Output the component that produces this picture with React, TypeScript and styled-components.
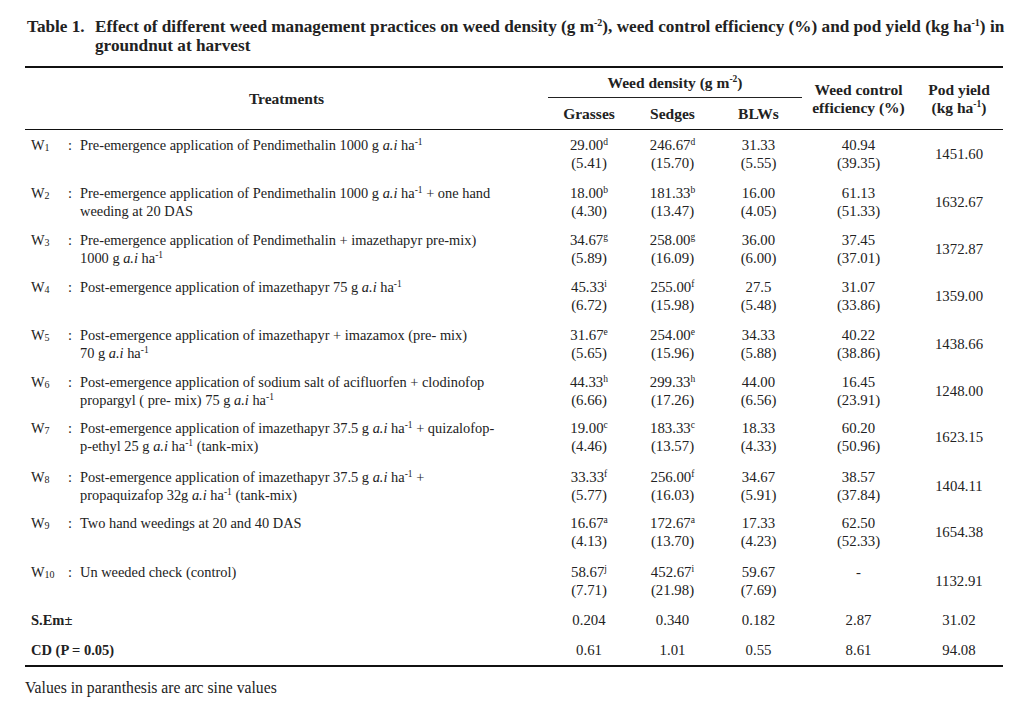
import React from 'react';
import styled, { createGlobalStyle } from 'styled-components';

const Global = createGlobalStyle`
  html, body { margin: 0; padding: 0; background: #fff; }
  body {
    font-family: "Liberation Serif", "Times New Roman", serif;
    color: #222;
  }
  sup { line-height: 0; }
`;

const COLS = '523px 82px 85px 87px 113px 88px';

const Page = styled.div`
  width: 1024px;
  height: 709px;
  box-sizing: border-box;
  padding: 17px 0 0 25px;
  overflow: hidden;
`;

const Title = styled.div`
  display: flex;
  font-weight: bold;
  font-size: 17.2px;
  line-height: 19px;
  white-space: nowrap;
  sup { font-size: 10px; vertical-align: 6px; }
`;

const TitleLabel = styled.div`
  width: 68px;
  padding-left: 2px;
  flex: none;
`;

const TitleText = styled.div``;

const Rule = styled.div<{ $w: number; $mt?: number }>`
  width: 978px;
  height: ${(p) => p.$w}px;
  background: #111;
  margin-top: ${(p) => p.$mt ?? 0}px;
`;

const Table = styled.div`
  width: 978px;
`;

const Header = styled.div`
  display: grid;
  grid-template-columns: ${COLS};
  grid-template-rows: 30px 31px;
  font-weight: bold;
  font-size: 15.5px;
  line-height: 18px;
  sup { font-size: 9.5px; vertical-align: 6px; }
`;

const HeadCell = styled.div<{ $col: string; $row: string; $line?: boolean }>`
  grid-column: ${(p) => p.$col};
  grid-row: ${(p) => p.$row};
  display: flex;
  align-items: center;
  justify-content: center;
  text-align: center;
  white-space: nowrap;
  ${(p) => (p.$line ? 'border-bottom: 1.5px solid #222;' : '')}
`;

const Row = styled.div<{ $h: number }>`
  display: grid;
  grid-template-columns: ${COLS};
  height: ${(p) => p.$h}px;
  align-items: start;
  padding-top: 6px;
  box-sizing: border-box;
  font-size: 14.4px;
  line-height: 18px;
`;

const Treat = styled.div`
  display: flex;
  padding-left: 6px;
  white-space: nowrap;
`;

const Code = styled.div`
  width: 37px;
  flex: none;
  sub { font-size: 10px; vertical-align: -1px; line-height: 0; }
`;

const Colon = styled.div`
  width: 12px;
  flex: none;
`;

const Desc = styled.div`
  sup { font-size: 9.5px; vertical-align: 5px; }
`;

const Num = styled.div`
  text-align: center;
  white-space: nowrap;
  font-size: 14.8px;
  sup { font-size: 9.5px; vertical-align: 5px; }
`;

const Pod = styled.div`
  height: 36px;
  display: flex;
  align-items: center;
  justify-content: center;
  font-size: 14.8px;
`;

const StatRow = styled.div`
  display: grid;
  grid-template-columns: ${COLS};
  height: 30px;
  align-items: center;
  line-height: 18px;
`;

const StatLabel = styled.div`
  padding-left: 6px;
  font-weight: bold;
  font-size: 14.5px;
`;

const Foot = styled.div`
  margin-top: 12px;
  font-size: 15.7px;
  line-height: 18px;
`;

const AI = () => (
  <>
    <i>a.i</i> ha<sup>-1</sup>
  </>
);

type R = {
  n: string;
  h: number;
  d: React.ReactNode;
  g: [string, string, string];
  s: [string, string, string];
  b: [string, string];
  w: [string, string];
  p: string;
};

const rows: R[] = [
  { n: '1', h: 48, d: <>Pre-emergence application of Pendimethalin 1000 g <AI /></>, g: ['29.00', 'd', '(5.41)'], s: ['246.67', 'd', '(15.70)'], b: ['31.33', '(5.55)'], w: ['40.94', '(39.35)'], p: '1451.60' },
  { n: '2', h: 47, d: <>Pre-emergence application of Pendimethalin 1000 g <AI /> + one hand<br />weeding at 20 DAS</>, g: ['18.00', 'b', '(4.30)'], s: ['181.33', 'b', '(13.47)'], b: ['16.00', '(4.05)'], w: ['61.13', '(51.33)'], p: '1632.67' },
  { n: '3', h: 47, d: <>Pre-emergence application of Pendimethalin + imazethapyr pre-mix)<br />1000 g <AI /></>, g: ['34.67', 'g', '(5.89)'], s: ['258.00', 'g', '(16.09)'], b: ['36.00', '(6.00)'], w: ['37.45', '(37.01)'], p: '1372.87' },
  { n: '4', h: 48, d: <>Post-emergence application of imazethapyr 75 g <AI /></>, g: ['45.33', 'i', '(6.72)'], s: ['255.00', 'f', '(15.98)'], b: ['27.5', '(5.48)'], w: ['31.07', '(33.86)'], p: '1359.00' },
  { n: '5', h: 47, d: <>Post-emergence application of imazethapyr + imazamox (pre- mix)<br />70 g <AI /></>, g: ['31.67', 'e', '(5.65)'], s: ['254.00', 'e', '(15.96)'], b: ['34.33', '(5.88)'], w: ['40.22', '(38.86)'], p: '1438.66' },
  { n: '6', h: 46, d: <>Post-emergence application of sodium salt of acifluorfen + clodinofop<br />propargyl ( pre- mix) 75 g <AI /></>, g: ['44.33', 'h', '(6.66)'], s: ['299.33', 'h', '(17.26)'], b: ['44.00', '(6.56)'], w: ['16.45', '(23.91)'], p: '1248.00' },
  { n: '7', h: 49, d: <>Post-emergence application of imazethapyr 37.5 g <AI /> + quizalofop-<br />p-ethyl 25 g <AI /> (tank-mix)</>, g: ['19.00', 'c', '(4.46)'], s: ['183.33', 'c', '(13.57)'], b: ['18.33', '(4.33)'], w: ['60.20', '(50.96)'], p: '1623.15' },
  { n: '8', h: 46, d: <>Post-emergence application of imazethapyr 37.5 g <AI /> +<br />propaquizafop 32g <AI /> (tank-mix)</>, g: ['33.33', 'f', '(5.77)'], s: ['256.00', 'f', '(16.03)'], b: ['34.67', '(5.91)'], w: ['38.57', '(37.84)'], p: '1404.11' },
  { n: '9', h: 49, d: <>Two hand weedings at 20 and 40 DAS</>, g: ['16.67', 'a', '(4.13)'], s: ['172.67', 'a', '(13.70)'], b: ['17.33', '(4.23)'], w: ['62.50', '(52.33)'], p: '1654.38' },
  { n: '10', h: 48, d: <>Un weeded check (control)</>, g: ['58.67', 'j', '(7.71)'], s: ['452.67', 'i', '(21.98)'], b: ['59.67', '(7.69)'], w: ['-', ''], p: '1132.91' },
];

const stats = [
  { l: 'S.Em±', v: ['0.204', '0.340', '0.182', '2.87', '31.02'] },
  { l: 'CD (P = 0.05)', v: ['0.61', '1.01', '0.55', '8.61', '94.08'] },
];

export default function App() {
  return (
    <>
      <Global />
      <Page>
        <Title>
          <TitleLabel>Table 1.</TitleLabel>
          <TitleText>
            Effect of different weed management practices on weed density (g m<sup>-2</sup>), weed control efficiency (%) and pod yield (kg ha<sup>-1</sup>) in
            <br />
            groundnut at harvest
          </TitleText>
        </Title>
        <Rule $w={2} $mt={11} />
        <Table>
          <Header>
            <HeadCell $col="1" $row="1 / span 2">Treatments</HeadCell>
            <HeadCell $col="2 / span 3" $row="1" $line>
              <span>
                Weed density (g m<sup>-2</sup>)
              </span>
            </HeadCell>
            <HeadCell $col="2" $row="2">Grasses</HeadCell>
            <HeadCell $col="3" $row="2">Sedges</HeadCell>
            <HeadCell $col="4" $row="2">BLWs</HeadCell>
            <HeadCell $col="5" $row="1 / span 2">
              <span>
                Weed control
                <br />
                efficiency (%)
              </span>
            </HeadCell>
            <HeadCell $col="6" $row="1 / span 2">
              <span>
                Pod yield
                <br />
                (kg ha<sup>-1</sup>)
              </span>
            </HeadCell>
          </Header>
          <Rule $w={1} />
          {rows.map((r) => (
            <Row key={r.n} $h={r.h}>
              <Treat>
                <Code>
                  W<sub>{r.n}</sub>
                </Code>
                <Colon>:</Colon>
                <Desc>{r.d}</Desc>
              </Treat>
              <Num>
                {r.g[0]}
                <sup>{r.g[1]}</sup>
                <br />
                {r.g[2]}
              </Num>
              <Num>
                {r.s[0]}
                <sup>{r.s[1]}</sup>
                <br />
                {r.s[2]}
              </Num>
              <Num>
                {r.b[0]}
                <br />
                {r.b[1]}
              </Num>
              <Num>
                {r.w[0]}
                <br />
                {r.w[1]}
              </Num>
              <Pod>{r.p}</Pod>
            </Row>
          ))}
          {stats.map((s) => (
            <StatRow key={s.l}>
              <StatLabel>{s.l}</StatLabel>
              {s.v.map((v, i) => (
                <Num key={i}>{v}</Num>
              ))}
            </StatRow>
          ))}
          <Rule $w={2} />
        </Table>
        <Foot>Values in paranthesis are arc sine values</Foot>
      </Page>
    </>
  );
}
